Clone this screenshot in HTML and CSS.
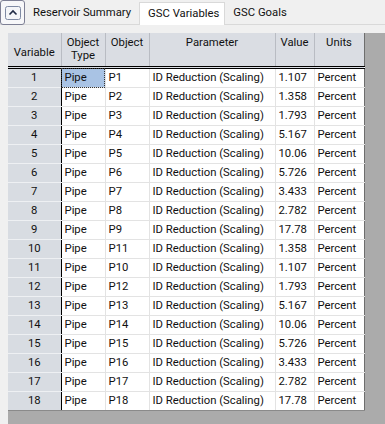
FILE: index.html
```html
<!DOCTYPE html>
<html lang="en">
<head>
    <meta charset="UTF-8">
    <title>GSC Variables</title>
    <link rel="stylesheet" href="styles.css">
</head>
<body>

    <div class="tabbar">
        <button class="collapse-btn" title="Collapse">
            <svg width="16" height="14" viewBox="0 0 16 14">
                <rect x="0.5" y="0.5" width="15" height="13" rx="2" fill="#f4f5f8" stroke="#7f8aa3"/>
                <path d="M4.5 8.5 L8 5 L11.5 8.5" fill="none" stroke="#1f2a44" stroke-width="1.6"/>
            </svg>
        </button>
        <div class="tab">Reservoir Summary</div>
        <div class="tab active">GSC Variables</div>
        <div class="tab">GSC Goals</div>
    </div>

    <div class="grid-area">
        <table class="grid">
            <colgroup>
                <col class="c-var">
                <col class="c-type">
                <col class="c-obj">
                <col class="c-param">
                <col class="c-val">
                <col class="c-unit">
            </colgroup>
            <thead>
                <tr>
                    <th class="mid">Variable</th>
                    <th>Object<br>Type</th>
                    <th>Object</th>
                    <th>Parameter</th>
                    <th>Value</th>
                    <th>Units</th>
                </tr>
            </thead>
            <tbody id="rows"></tbody>
        </table>
    </div>

    <script>
        const data = [
            ['P1', '1.107'], ['P2', '1.358'], ['P3', '1.793'], ['P4', '5.167'],
            ['P5', '10.06'], ['P6', '5.726'], ['P7', '3.433'], ['P8', '2.782'],
            ['P9', '17.78'], ['P11', '1.358'], ['P10', '1.107'], ['P12', '1.793'],
            ['P13', '5.167'], ['P14', '10.06'], ['P15', '5.726'], ['P16', '3.433'],
            ['P17', '2.782'], ['P18', '17.78']
        ];

        const tbody = document.getElementById('rows');
        data.forEach((item, i) => {
            const row = document.createElement('tr');
            row.innerHTML = `
                <td class="rowhead">${i + 1}</td>
                <td class="${i === 0 ? 'selected' : ''}">Pipe</td>
                <td>${item[0]}</td>
                <td>ID Reduction (Scaling)</td>
                <td class="num">${item[1]}</td>
                <td>Percent</td>
            `;
            tbody.appendChild(row);
        });
    </script>
</body>
</html>
```

FILE: styles.css
```css
body {
    font-family: Roboto, 'Liberation Sans', Arial, sans-serif;
    font-size: 11.3px;
    background: #f0f0f0;
    color: #111;
    margin: 0;
    padding: 0;
    width: 385px;
    height: 424px;
    overflow: hidden;
    display: flex;
    flex-direction: column;
}

.tabbar {
    display: flex;
    align-items: flex-end;
    height: 24px;
    border-bottom: 1px solid #d9d9d9;
    background: #f0f0f0;
}

.collapse-btn {
    align-self: flex-start;
    width: 25px;
    height: 25px;
    margin: 0 3px 0 0;
    padding: 0;
    border: 1px solid #7d7f94;
    border-radius: 3px;
    background: #f7f7f9;
    display: flex;
    align-items: center;
    justify-content: center;
}

.tab {
    padding: 0 7px 0 5px;
    height: 22px;
    line-height: 22px;
    white-space: nowrap;
}

.tab:first-of-type {
    margin-right: 1px;
}

.tab.active {
    background: #fff;
    border: 1px solid #d9d9d9;
    border-bottom: none;
    height: 22px;
    margin-bottom: -1px;
    padding: 0 5px 0 8px;
}

.tab.active + .tab {
    padding-left: 8px;
}

.grid-area {
    flex: 1;
    margin: 8px 0 0 8px;
    background: #ababab;
}

.grid {
    border-collapse: collapse;
    background: #fff;
    table-layout: fixed;
    width: 356px;
}

.c-var { width: 53px; }
.c-type { width: 44px; }
.c-obj { width: 44px; }
.c-param { width: 126px; }
.c-val { width: 39px; }
.c-unit { width: 50px; }

th {
    background: #dadde3;
    font-weight: normal;
    height: 28px;
    padding: 3px 2px 0;
    vertical-align: top;
    text-align: center;
    line-height: 13px;
    border-right: 1px solid #b9bcc3;
    border-bottom: 3px double #000;
}

th.mid {
    vertical-align: middle;
    padding-top: 5px;
}

th:last-child {
    border-right: 1px solid #6e6e6e;
}

td {
    height: 18px;
    padding: 0 3px;
    line-height: 18px;
    white-space: nowrap;
    border-right: 1px solid #e3e3e3;
    border-bottom: 1px solid #e3e3e3;
}

td:last-child {
    border-right: 1px solid #6e6e6e;
}

tbody tr:last-child td {
    border-bottom: 1px solid #8a8a8a;
}

td.rowhead {
    background: #d8dce2;
    text-align: center;
    border-right: 1px solid #000;
    border-bottom: 1px solid #eef0f3;
}

td.num {
    text-align: right;
    padding-right: 7px;
}

td.selected {
    background: #a9c3e4;
    outline: 1px dotted #333;
    outline-offset: -1px;
}
```
